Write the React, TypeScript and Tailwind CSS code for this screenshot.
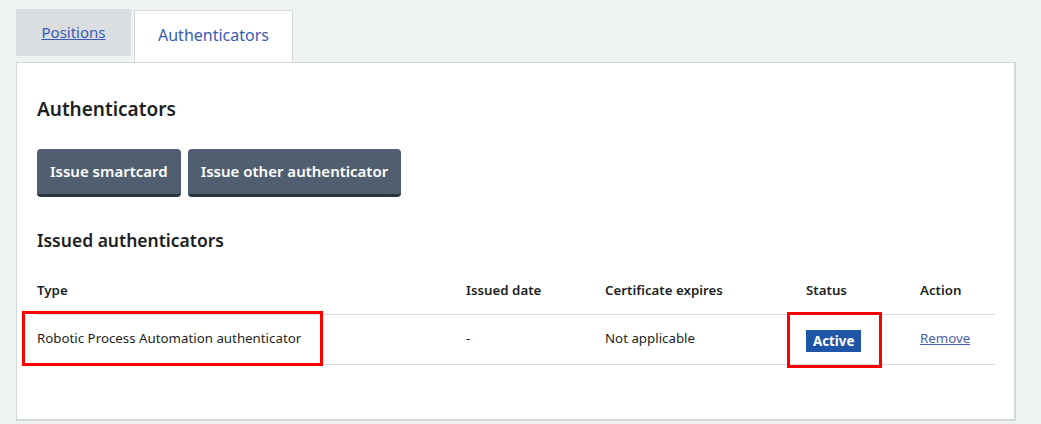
import React from 'react';

interface Row {
  type: string;
  issued: string;
  expires: string;
  status: string;
}

const rows: Row[] = [
  {
    type: 'Robotic Process Automation authenticator',
    issued: '-',
    expires: 'Not applicable',
    status: 'Active'
  }
];

const App: React.FC = () => {
  return (
    <div
      className="min-h-[424px] bg-[#eff2f3] pt-[9px] pl-4 pr-[25px] text-[#1b1f23]"
      style={{ fontFamily: '"Noto Sans", "Open Sans", sans-serif' }}
    >
      {/* tabs */}
      <div className="flex items-end gap-[3px]">
        <a
          href="#"
          className="flex h-[47px] w-[115px] mb-[6px] items-start justify-center pt-[12px] bg-[#dbdee1] text-[15px] text-[#3a5bb5] underline"
        >
          Positions
        </a>
        <div className="relative -mb-px flex h-[53px] w-[159px] items-start justify-center pt-[12px] bg-white border border-b-0 border-[#d5d8da] text-[16px] text-[#3a5bb5]">
          Authenticators
        </div>
      </div>

      {/* panel */}
      <div className="relative bg-white border border-[#d5d8da] border-r-2 border-b-2 px-5 pt-[33px] pb-[54px]">
        <h2 className="text-[19px] font-semibold leading-[26px]">Authenticators</h2>

        <div className="mt-[27px] flex gap-[7px]">
          <button className="h-[48px] px-[13px] rounded-[4px] bg-[#4f5f6f] border-b-[3px] border-[#2b343b] text-white font-semibold text-[15px]">
            Issue smartcard
          </button>
          <button className="h-[48px] px-[13px] rounded-[4px] bg-[#4f5f6f] border-b-[3px] border-[#2b343b] text-white font-semibold text-[15px]">
            Issue other authenticator
          </button>
        </div>

        <h3 className="mt-[30px] text-[17.5px] font-semibold leading-[26px]">Issued authenticators</h3>

        <table className="mt-[28px] w-[958px] text-[13.3px] border-collapse">
          <thead>
            <tr className="border-b border-[#d9dcde]">
              <th className="w-[429px] text-left font-semibold pb-[13px]">Type</th>
              <th className="w-[139px] text-left font-semibold pb-[13px]">Issued date</th>
              <th className="w-[201px] text-left font-semibold pb-[13px]">Certificate expires</th>
              <th className="w-[114px] text-left font-semibold pb-[13px]">Status</th>
              <th className="text-left font-semibold pb-[13px]">Action</th>
            </tr>
          </thead>
          <tbody>
            {rows.map((r) => (
              <tr key={r.type} className="h-[50px] border-b border-[#d9dcde]">
                <td>{r.type}</td>
                <td>{r.issued}</td>
                <td>{r.expires}</td>
                <td>
                  <span className="inline-block bg-[#1f55a6] text-white font-bold px-[7px] leading-[22px] mt-[3px]">
                    {r.status}
                  </span>
                </td>
                <td>
                  <a href="#" className="text-[#4a5fae] underline">Remove</a>
                </td>
              </tr>
            ))}
          </tbody>
        </table>

        {/* annotation boxes */}
        <div className="absolute left-[5px] top-[248px] h-[55px] w-[301px] border-[3px] border-[#ff0000]" />
        <div className="absolute left-[770px] top-[249px] h-[56px] w-[95px] border-[3px] border-[#ff0000]" />
      </div>
    </div>
  );
};

export default App;
